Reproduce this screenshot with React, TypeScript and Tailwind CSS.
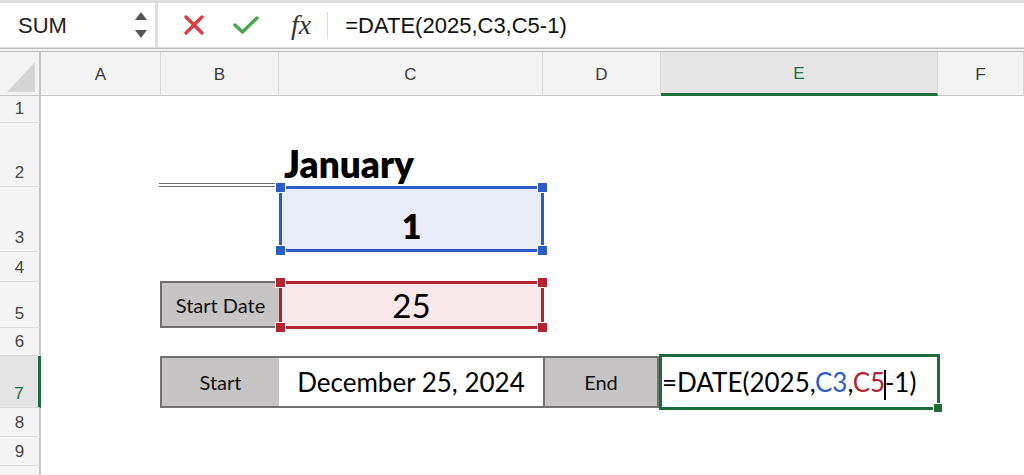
import React from "react";

const cellFont = { fontFamily: "Lato, 'Open Sans', sans-serif" };

const Handle = ({ pos, color }: { pos: string; color: string }) => (
  <span className={`absolute w-[9px] h-[9px] ring-1 ring-white ${color} ${pos}`} />
);

const RowHead = ({ n, h, active }: { n?: number; h: string; active?: boolean }) => (
  <div
    className={`${h} w-[41px] shrink-0 flex items-end justify-center pb-[3px] border-b border-[#dcdcdc] ${
      active
        ? "bg-[#e4e4e4] text-[#1e6b3c] border-r-[3px] border-r-[#1e6b3c]"
        : "bg-[#f4f4f4] text-[#444] border-r-2 border-r-[#c4c4c4]"
    }`}
  >
    <span className="text-[17px] leading-5">{n}</span>
  </div>
);

const ColHead = ({ label, w, active }: { label: string; w: string; active?: boolean }) => (
  <div
    className={`${w} h-full flex items-center justify-center border-r border-[#d8d8d8] ${
      active ? "bg-[#e6e6e6] text-[#1e6b3c] border-b-[3px] border-b-[#1e6b3c]" : "border-b border-b-[#c8c8c8]"
    }`}
  >
    <span className="text-[17px] pt-[3px]">{label}</span>
  </div>
);

export default function App() {
  return (
    <div
      className="w-[1024px] h-[475px] overflow-hidden bg-white text-[#1a1a1a]"
      style={{ fontFamily: "'Liberation Sans', Arial, sans-serif" }}
    >
      {/* formula bar */}
      <div className="h-[48px] bg-[#dedede] pt-[3px] flex gap-[3px]">
        <div className="w-[155px] h-[44px] bg-white flex items-center pl-[18px] pr-[8px]">
          <span className="text-[22px] text-[#222] flex-1">SUM</span>
          <div className="flex flex-col gap-[10px]">
            <svg width="12" height="8" viewBox="0 0 12 8"><path d="M6 0 L12 8 L0 8 Z" fill="#555" /></svg>
            <svg width="12" height="8" viewBox="0 0 12 8"><path d="M0 0 L12 0 L6 8 Z" fill="#555" /></svg>
          </div>
        </div>
        <div className="flex-1 h-[44px] bg-white flex items-center">
          <svg className="ml-[25px]" width="22" height="22" viewBox="0 0 22 22">
            <path d="M3 3 L19 19 M19 3 L3 19" stroke="#e03a3e" strokeWidth="3.4" strokeLinecap="round" />
          </svg>
          <svg className="ml-[28px]" width="26" height="20" viewBox="0 0 26 20">
            <path d="M2 10 L9.5 17 L24 3" stroke="#45a84a" strokeWidth="3.4" fill="none" strokeLinecap="round" strokeLinejoin="round" />
          </svg>
          <span
            className="ml-[32px] text-[28px] italic text-[#333] leading-none"
            style={{ fontFamily: "'Liberation Serif', 'DejaVu Serif', serif" }}
          >
            fx
          </span>
          <span className="ml-[16px] w-px h-[27px] bg-[#dadada]" />
          <span className="ml-[17px] text-[22px] text-[#111]">=DATE(2025,C3,C5-1)</span>
        </div>
      </div>
      <div className="h-[4px] border-t border-b border-[#bdbdbd] bg-[#f2f2f2]" />

      {/* column headers */}
      <div className="h-[44px] flex bg-[#f3f3f3] text-[#3c3c3c]">
        <div className="w-[41px] h-full border-r-2 border-[#c4c4c4] border-b border-b-[#c8c8c8] flex items-end justify-end pr-[4px] pb-[3px]">
          <svg width="28" height="30" viewBox="0 0 28 30"><path d="M28 0 L28 30 L0 30 Z" fill="#d4d4d4" /></svg>
        </div>
        <ColHead label="A" w="w-[120px]" />
        <ColHead label="B" w="w-[118px]" />
        <ColHead label="C" w="w-[264px]" />
        <ColHead label="D" w="w-[118px]" />
        <ColHead label="E" w="w-[277px]" active />
        <ColHead label="F" w="flex-1" />
      </div>

      {/* row 1 */}
      <div className="flex h-[27px]">
        <RowHead n={1} h="h-[27px]" />
      </div>

      {/* row 2 */}
      <div className="flex h-[64px]">
        <RowHead n={2} h="h-[64px]" />
        <div className="w-[118px] ml-[118px] h-[64px] border-b-[4px] border-double border-[#6a6a6a]" />
        <div className="w-[264px] flex items-end pl-[7px] pb-[2px]">
          <span className="text-[37px] font-extrabold text-black leading-[42px]" style={cellFont}>January</span>
        </div>
      </div>

      {/* row 3 */}
      <div className="flex h-[65px]">
        <RowHead n={3} h="h-[65px]" />
        <div className="w-[238px]" />
        <div className="relative w-[265px] h-[66px] -mt-px border-[3px] border-[#2d5cc6] bg-[#e8ecf6] flex items-end justify-center pb-[5px]">
          <span className="text-[34px] font-extrabold text-black leading-9" style={cellFont}>1</span>
          <Handle pos="-left-[6px] -top-[6px]" color="bg-[#2d5cc6]" />
          <Handle pos="-right-[6px] -top-[6px]" color="bg-[#2d5cc6]" />
          <Handle pos="-left-[6px] -bottom-[6px]" color="bg-[#2d5cc6]" />
          <Handle pos="-right-[6px] -bottom-[6px]" color="bg-[#2d5cc6]" />
        </div>
      </div>

      {/* row 4 */}
      <div className="flex h-[30px]">
        <RowHead n={4} h="h-[30px]" />
      </div>

      {/* row 5 */}
      <div className="flex h-[46px]">
        <RowHead n={5} h="h-[46px]" />
        <div className="w-[119px]" />
        <div className="w-[119px] h-[47px] -mt-px border-2 border-r-0 border-[#6e6e6e] bg-[#c6c4c5] flex items-center justify-center">
          <span className="text-[20px] text-[#111]" style={cellFont}>Start Date</span>
        </div>
        <div className="relative w-[265px] h-[48px] -mt-px border-[3px] border-[#b32333] bg-[#f8e8e9] flex items-center justify-center">
          <span className="text-[33px] text-black leading-9" style={cellFont}>25</span>
          <Handle pos="-left-[6px] -top-[6px]" color="bg-[#b32333]" />
          <Handle pos="-right-[6px] -top-[6px]" color="bg-[#b32333]" />
          <Handle pos="-left-[6px] -bottom-[6px]" color="bg-[#b32333]" />
          <Handle pos="-right-[6px] -bottom-[6px]" color="bg-[#b32333]" />
        </div>
      </div>

      {/* row 6 */}
      <div className="flex h-[28px]">
        <RowHead n={6} h="h-[28px]" />
      </div>

      {/* row 7 */}
      <div className="flex h-[52px]">
        <RowHead n={7} h="h-[52px]" active />
        <div className="w-[119px]" />
        <div className="w-[499px] h-[52px] flex border-2 border-[#727272]" style={cellFont}>
          <div className="w-[117px] bg-[#c6c4c5] flex items-center justify-center">
            <span className="text-[20px] text-[#111]">Start</span>
          </div>
          <div className="w-[264px] bg-white flex items-center justify-center">
            <span className="text-[26px] text-black">December 25, 2024</span>
          </div>
          <div className="flex-1 border-l-2 border-[#727272] bg-[#c6c4c5] flex items-center justify-center">
            <span className="text-[20px] text-[#111]">End</span>
          </div>
        </div>
        <div
          className="relative w-[281px] h-[56px] -mt-[2px] border-[3px] border-[#1e6b3c] bg-white flex items-center"
          style={cellFont}
        >
          <span className="text-[26px] text-black whitespace-nowrap">
            =DATE(2025,<span className="text-[#2d5cc6]">C3</span>,<span className="text-[#b32333]">C5</span>
            <span className="inline-block w-[1.5px] h-[30px] bg-black align-middle -mx-[1px]" />
            -1)
          </span>
          <span className="absolute -right-[5px] -bottom-[5px] w-[8px] h-[8px] bg-[#1e6b3c] ring-1 ring-white" />
        </div>
      </div>

      {/* rows 8 - 10 */}
      <div className="flex h-[29px]">
        <RowHead n={8} h="h-[29px]" />
      </div>
      <div className="flex h-[29px]">
        <RowHead n={9} h="h-[29px]" />
      </div>
      <div className="flex h-[29px]">
        <RowHead h="h-[29px]" />
      </div>
    </div>
  );
}
